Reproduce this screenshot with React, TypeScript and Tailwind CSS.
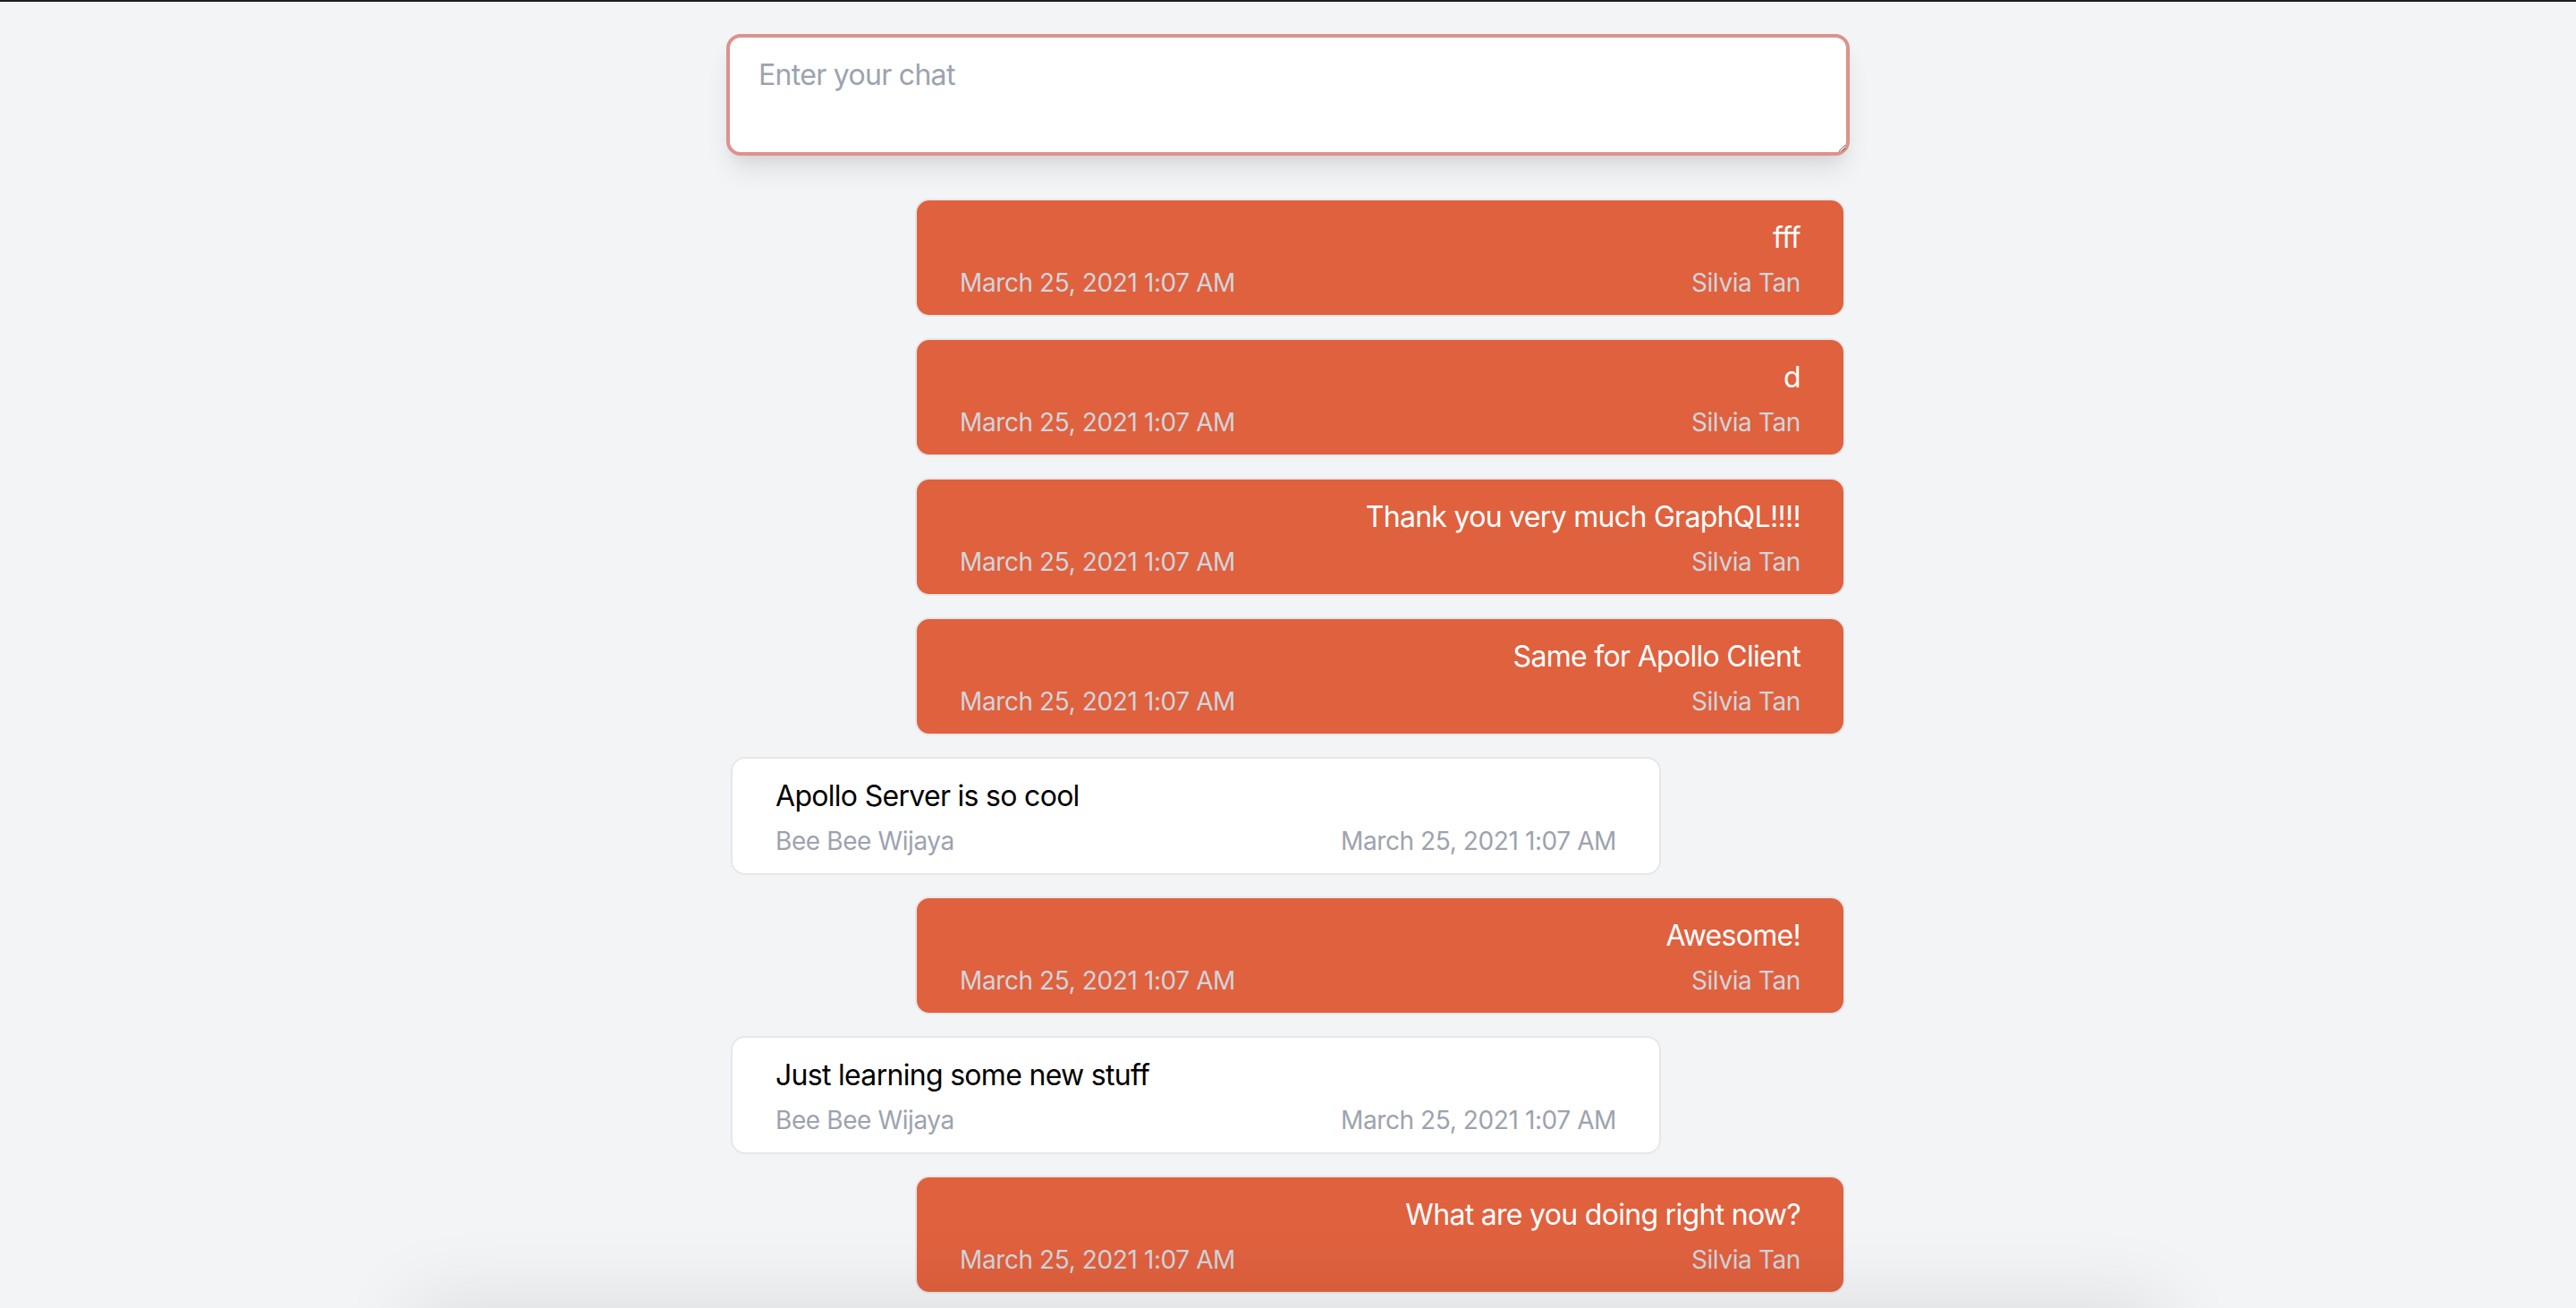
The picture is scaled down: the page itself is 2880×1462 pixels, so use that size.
type Message = {
  id: number;
  text: string;
  author: string;
  mine: boolean;
};

const messages: Message[] = [
  { id: 1, text: "fff", author: "Silvia Tan", mine: true },
  { id: 2, text: "d", author: "Silvia Tan", mine: true },
  { id: 3, text: "Thank you very much GraphQL!!!!", author: "Silvia Tan", mine: true },
  { id: 4, text: "Same for Apollo Client", author: "Silvia Tan", mine: true },
  { id: 5, text: "Apollo Server is so cool", author: "Bee Bee Wijaya", mine: false },
  { id: 6, text: "Awesome!", author: "Silvia Tan", mine: true },
  { id: 7, text: "Just learning some new stuff", author: "Bee Bee Wijaya", mine: false },
  { id: 8, text: "What are you doing right now?", author: "Silvia Tan", mine: true },
];

const date = "March 25, 2021 1:07 AM";

function Bubble({ msg }: { msg: Message }) {
  if (msg.mine) {
    return (
      <div className="self-end w-[1040px] rounded-2xl border-2 border-[#e5e7eb] bg-[#e0613e] px-[48px] pt-[18px] pb-[16px]">
        <p className="text-right text-[32px] leading-[48px] tracking-[-0.7px] text-white">{msg.text}</p>
        <div className="mt-[6px] flex justify-between text-[28px] leading-[40px] tracking-[-0.4px] text-[#d1d5db]">
          <span>{date}</span>
          <span>{msg.author}</span>
        </div>
      </div>
    );
  }
  return (
    <div className="self-start w-[1040px] rounded-2xl border-2 border-[#e5e7eb] bg-white px-[48px] pt-[18px] pb-[16px]">
      <p className="text-[32px] leading-[48px] tracking-[-0.7px] text-black">{msg.text}</p>
      <div className="mt-[6px] flex justify-between text-[28px] leading-[40px] tracking-[-0.4px] text-[#9ca3af]">
        <span>{msg.author}</span>
        <span>{date}</span>
      </div>
    </div>
  );
}

export default function App() {
  return (
    <div className="min-h-screen border-t-2 border-[#1c1c1c] bg-[#f3f4f6] pb-[40px] font-['Inter',sans-serif]">
      <div className="mx-auto w-[1256px] pt-[36px]">
        <textarea
          placeholder="Enter your chat"
          className="block h-[136px] w-full rounded-2xl border-4 border-[#de918c] bg-white px-[32px] pt-[18px] pb-[14px] text-[32px] leading-[48px] tracking-[-0.7px] text-black placeholder:text-[#9ca3af] shadow-[0_20px_30px_-6px_rgba(0,0,0,0.1),0_8px_12px_-4px_rgba(0,0,0,0.05)] outline-none"
        />
        <div className="mt-[48px] flex flex-col gap-[24px] px-[5px]">
          {messages.map((m) => (
            <Bubble key={m.id} msg={m} />
          ))}
        </div>
      </div>
      <div className="fixed left-[470px] right-[470px] top-[100vh] h-[200px] bg-white shadow-[0_0_90px_10px_rgba(0,0,0,0.09)]" />
    </div>
  );
}
